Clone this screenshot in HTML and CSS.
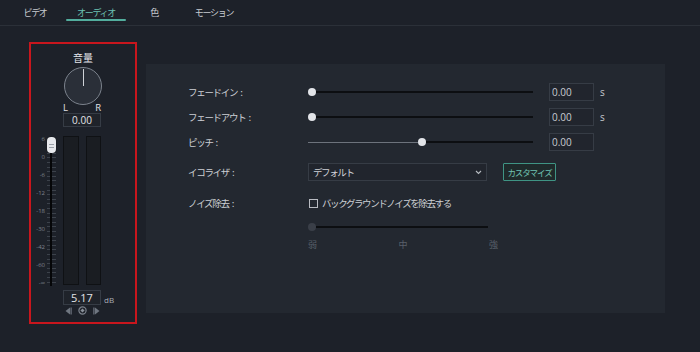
FILE: index.html
```html
<!DOCTYPE html>
<html lang="ja">
<head>
<meta charset="utf-8">
<link rel="stylesheet" href="styles.css">
</head>
<body>
<div class="tabs">
  <div class="tab t1">ビデオ</div>
  <div class="tab t2 active">オーディオ</div>
  <div class="tab t3">色</div>
  <div class="tab t4">モーション</div>
</div>
<div class="content">
  <div class="volume">
    <div class="vol-title">音量</div>
    <div class="knob"><div class="knob-line"></div></div>
    <div class="lr"><span>L</span><span>R</span></div>
    <div class="valbox small">0.00</div>
    <div class="fader">
      <div class="scale">
        <span>6</span><span>0</span><span>-6</span><span>-12</span><span>-18</span><span>-30</span><span>-42</span><span>-60</span><span>-∞</span>
      </div>
      <div class="track"><div class="thumb"></div></div>
      <div class="meter m1"></div>
      <div class="meter m2"></div>
    </div>
    <div class="db-row">
      <div class="valbox big">5.17</div>
      <span class="db">dB</span>
    </div>
    <div class="transport">
      <svg width="7" height="8" viewBox="0 0 7 8"><polygon points="5,0.5 5,7.5 0.5,4" fill="#6f7680"/><rect x="5.5" y="0.5" width="1.2" height="7" fill="#6f7680"/></svg>
      <svg width="9" height="9" viewBox="0 0 9 9"><circle cx="4.5" cy="4.5" r="3.6" fill="none" stroke="#7a818b" stroke-width="1.2"/><polygon points="4.5,2.4 6.6,4.5 4.5,6.6 2.4,4.5" fill="#8a919b"/></svg>
      <svg width="7" height="8" viewBox="0 0 7 8"><rect x="0.3" y="0.5" width="1.2" height="7" fill="#6f7680"/><polygon points="2,0.5 2,7.5 6.5,4" fill="#6f7680"/></svg>
    </div>
  </div>
  <div class="panel">
    <div class="row">
      <div class="label">フェードイン<span class="colon">:</span></div>
      <div class="slider w225"><div class="knobdot"></div><div class="line dark"></div></div>
      <div class="input">0.00</div><span class="unit">s</span>
    </div>
    <div class="row">
      <div class="label">フェードアウト<span class="colon">:</span></div>
      <div class="slider w225"><div class="knobdot"></div><div class="line dark"></div></div>
      <div class="input">0.00</div><span class="unit">s</span>
    </div>
    <div class="row">
      <div class="label">ピッチ<span class="colon">:</span></div>
      <div class="slider w225"><div class="line light pitch-left"></div><div class="knobdot"></div><div class="line dark"></div></div>
      <div class="input">0.00</div>
    </div>
    <div class="row eq">
      <div class="label">イコライザ<span class="colon">:</span></div>
      <div class="select"><span>デフォルト</span>
        <svg width="7" height="5" viewBox="0 0 7 5"><polyline points="1,1 3.5,3.5 6,1" fill="none" stroke="#b8bcc2" stroke-width="1.1"/></svg>
      </div>
      <div class="btn">カスタマイズ</div>
    </div>
    <div class="row noise">
      <div class="label">ノイズ除去<span class="colon">:</span></div>
      <div class="check"></div>
      <span class="check-text">バックグラウンドノイズを除去する</span>
    </div>
    <div class="row nslider">
      <div class="spacer"></div>
      <div class="slider w180"><div class="knobdot dim"></div><div class="line dark"></div></div>
    </div>
    <div class="row nlabels">
      <div class="spacer"></div>
      <div class="levels"><span>弱</span><span>中</span><span>強</span></div>
    </div>
  </div>
</div>
</body>
</html>
```
FILE: styles.css
```css
* { box-sizing: border-box; }
html, body { margin: 0; padding: 0; }
body {
  width: 700px;
  height: 352px;
  overflow: hidden;
  background: #1d2129;
  font-family: "Noto Sans CJK JP", "Noto Sans", sans-serif;
  color: #c5c8ce;
}
.tabs {
  display: flex;
  height: 26px;
  padding-left: 13px;
  border-bottom: 1px solid #2b3038;
}
.tab {
  text-align: center;
  font-size: 9px;
  letter-spacing: -1.3px;
  height: 25px;
  color: #c8cbd1;
  padding-top: 1px;
  line-height: 24px;
}
.t1 { width: 44px; }
.t2 { width: 60px; margin-left: 9px; }
.t3 { width: 56px; }
.t4 { width: 64px; }
.tab.active {
  color: #6ec4b4;
  position: relative;
}
.tab.active::after {
  content: "";
  position: absolute;
  left: 0; right: 0;
  top: 19px;
  height: 2px;
  background: #52ad9d;
  border-radius: 1px;
}
.content {
  display: flex;
  align-items: flex-start;
  padding: 16px 0 0 29px;
}
.volume {
  width: 108px;
  height: 282px;
  border: 2px solid #c8161d;
  display: flex;
  flex-direction: column;
  align-items: center;
}
.vol-title {
  margin-top: 8px;
  font-size: 10px;
  line-height: 11px;
  color: #e3e5e9;
}
.knob {
  margin-top: 4px;
  width: 38px;
  height: 38px;
  border-radius: 50%;
  border: 1.5px solid #7c838d;
  background: #2a2f38;
  display: flex;
  justify-content: center;
}
.knob-line {
  width: 1px;
  height: 17px;
  margin-top: 1px;
  background: #cfd2d7;
}
.lr {
  margin-top: -2px;
  width: 38px;
  display: flex;
  justify-content: space-between;
  font-family: "Open Sans", sans-serif;
  font-size: 9.5px;
  line-height: 10px;
  color: #e0e2e6;
  margin-left: -2px;
}
.valbox {
  border: 1px solid #363c45;
  background: #1f232a;
  text-align: center;
  font-family: "Open Sans", sans-serif;
  color: #e2e4e8;
}
.valbox.small {
  margin-top: 0;
  width: 38px;
  height: 14px;
  font-size: 10px;
  line-height: 12px;
  margin-left: -2px;
}
.fader {
  align-self: stretch;
  margin-top: 9px;
  height: 150px;
  display: flex;
}
.scale {
  width: 14px;
  display: flex;
  flex-direction: column;
  justify-content: space-between;
  align-items: flex-end;
  font-family: "Open Sans", sans-serif;
  font-size: 6px;
  line-height: 6px;
  color: #7f858f;
}
.track {
  position: relative;
  width: 11px;
  height: 150px;
}
.track::before {
  content: "";
  position: absolute;
  left: 2px; right: 0;
  top: 3px; bottom: 0;
  background: repeating-linear-gradient(to bottom, #3c424b 0, #3c424b 1px, transparent 1px, transparent 4.6px);
}
.track::after {
  content: "";
  position: absolute;
  left: 5px;
  width: 2px;
  top: 4px;
  bottom: 0;
  background: #050608;
}
.thumb {
  position: absolute;
  z-index: 2;
  left: 2px;
  top: 1px;
  width: 9px;
  height: 16px;
  border-radius: 4px;
  background: #e6e8ec;
  box-shadow: 0 0 1px #000;
}
.thumb::after {
  content: "";
  position: absolute;
  left: 2px; right: 2px;
  top: 7px;
  height: 2px;
  border-top: 1px solid #9aa0a8;
  border-bottom: 1px solid #9aa0a8;
}
.meter {
  height: 149px;
  background: #1a1d22;
  border: 1px solid #0f1114;
}
.m1 { width: 16px; margin-left: 7px; }
.m2 { width: 15px; margin-left: 7px; }
.db-row {
  align-self: stretch;
  display: flex;
  align-items: flex-end;
  margin-top: 4px;
  padding-left: 32px;
}
.valbox.big {
  width: 38px;
  height: 15px;
  font-size: 11px;
  line-height: 13px;
}
.db {
  margin-left: 3px;
  font-family: "Open Sans", sans-serif;
  font-size: 8px;
  line-height: 10px;
  color: #a9aeb5;
}
.transport {
  margin-top: 1px;
  display: flex;
  align-items: center;
  gap: 6px;
  margin-left: -2px;
}
.transport svg { display: block; }
.panel {
  margin-left: 9px;
  margin-top: 22px;
  width: 519px;
  height: 249px;
  background: #232830;
  padding: 19px 0 0 42px;
}
.row {
  display: flex;
  align-items: center;
  height: 18px;
  margin-bottom: 7px;
}
.label {
  width: 120px;
  font-size: 9.5px;
  letter-spacing: -1.3px;
  color: #cdd0d5;
  white-space: nowrap;
}
.colon { margin-left: 3px; }
.slider {
  display: flex;
  align-items: center;
  height: 8px;
}
.w225 { width: 225px; }
.w180 { width: 180px; }
.knobdot {
  width: 8px;
  height: 8px;
  border-radius: 50%;
  background: #e2e4e8;
  flex: none;
}
.knobdot.dim { background: #3a3f48; }
.line { height: 2px; }
.line.dark { flex: 1; background: #0c0e11; }
.line.light { background: #6d737c; height: 1px; }
.pitch-left { width: 110px; flex: none; }
.input {
  margin-left: 16px;
  width: 45px;
  height: 18px;
  border: 1px solid #363c45;
  background: #21252d;
  font-family: "Open Sans", sans-serif;
  font-size: 10px;
  line-height: 16px;
  padding-left: 2px;
  color: #c9ccd1;
}
.unit {
  margin-left: 6px;
  font-family: "Open Sans", sans-serif;
  font-size: 10px;
  color: #c5c8ce;
}
.row.eq { margin-top: 12px; margin-bottom: 0; }
.select {
  width: 179px;
  height: 18px;
  border: 1px solid #363c45;
  background: #21252d;
  display: flex;
  align-items: center;
  justify-content: space-between;
  padding: 0 4px 0 4px;
  font-size: 9.5px;
  letter-spacing: -1.4px;
  color: #d0d3d8;
}
.btn {
  margin-left: 16px;
  width: 53px;
  height: 18px;
  border: 1px solid #3f9484;
  border-radius: 1px;
  background: #1f2a2b;
  color: #70c2b2;
  font-size: 8.5px;
  letter-spacing: -1.1px;
  line-height: 16px;
  text-align: center;
}
.row.noise { margin-top: 13px; margin-bottom: 0; }
.check {
  width: 9px;
  height: 9px;
  border: 1px solid #b9bcc2;
  margin-left: 1px;
  margin-right: 4px;
}
.check-text {
  font-size: 9.5px;
  letter-spacing: -1.4px;
  color: #cdd0d5;
}
.row.nslider { margin-top: 11px; height: 8px; margin-bottom: 0; }
.spacer { width: 120px; flex: none; }
.row.nlabels { margin-top: 8px; height: 11px; }
.levels {
  width: 190px;
  display: flex;
  justify-content: space-between;
  font-size: 9px;
  line-height: 11px;
  color: #59606a;
}
```
